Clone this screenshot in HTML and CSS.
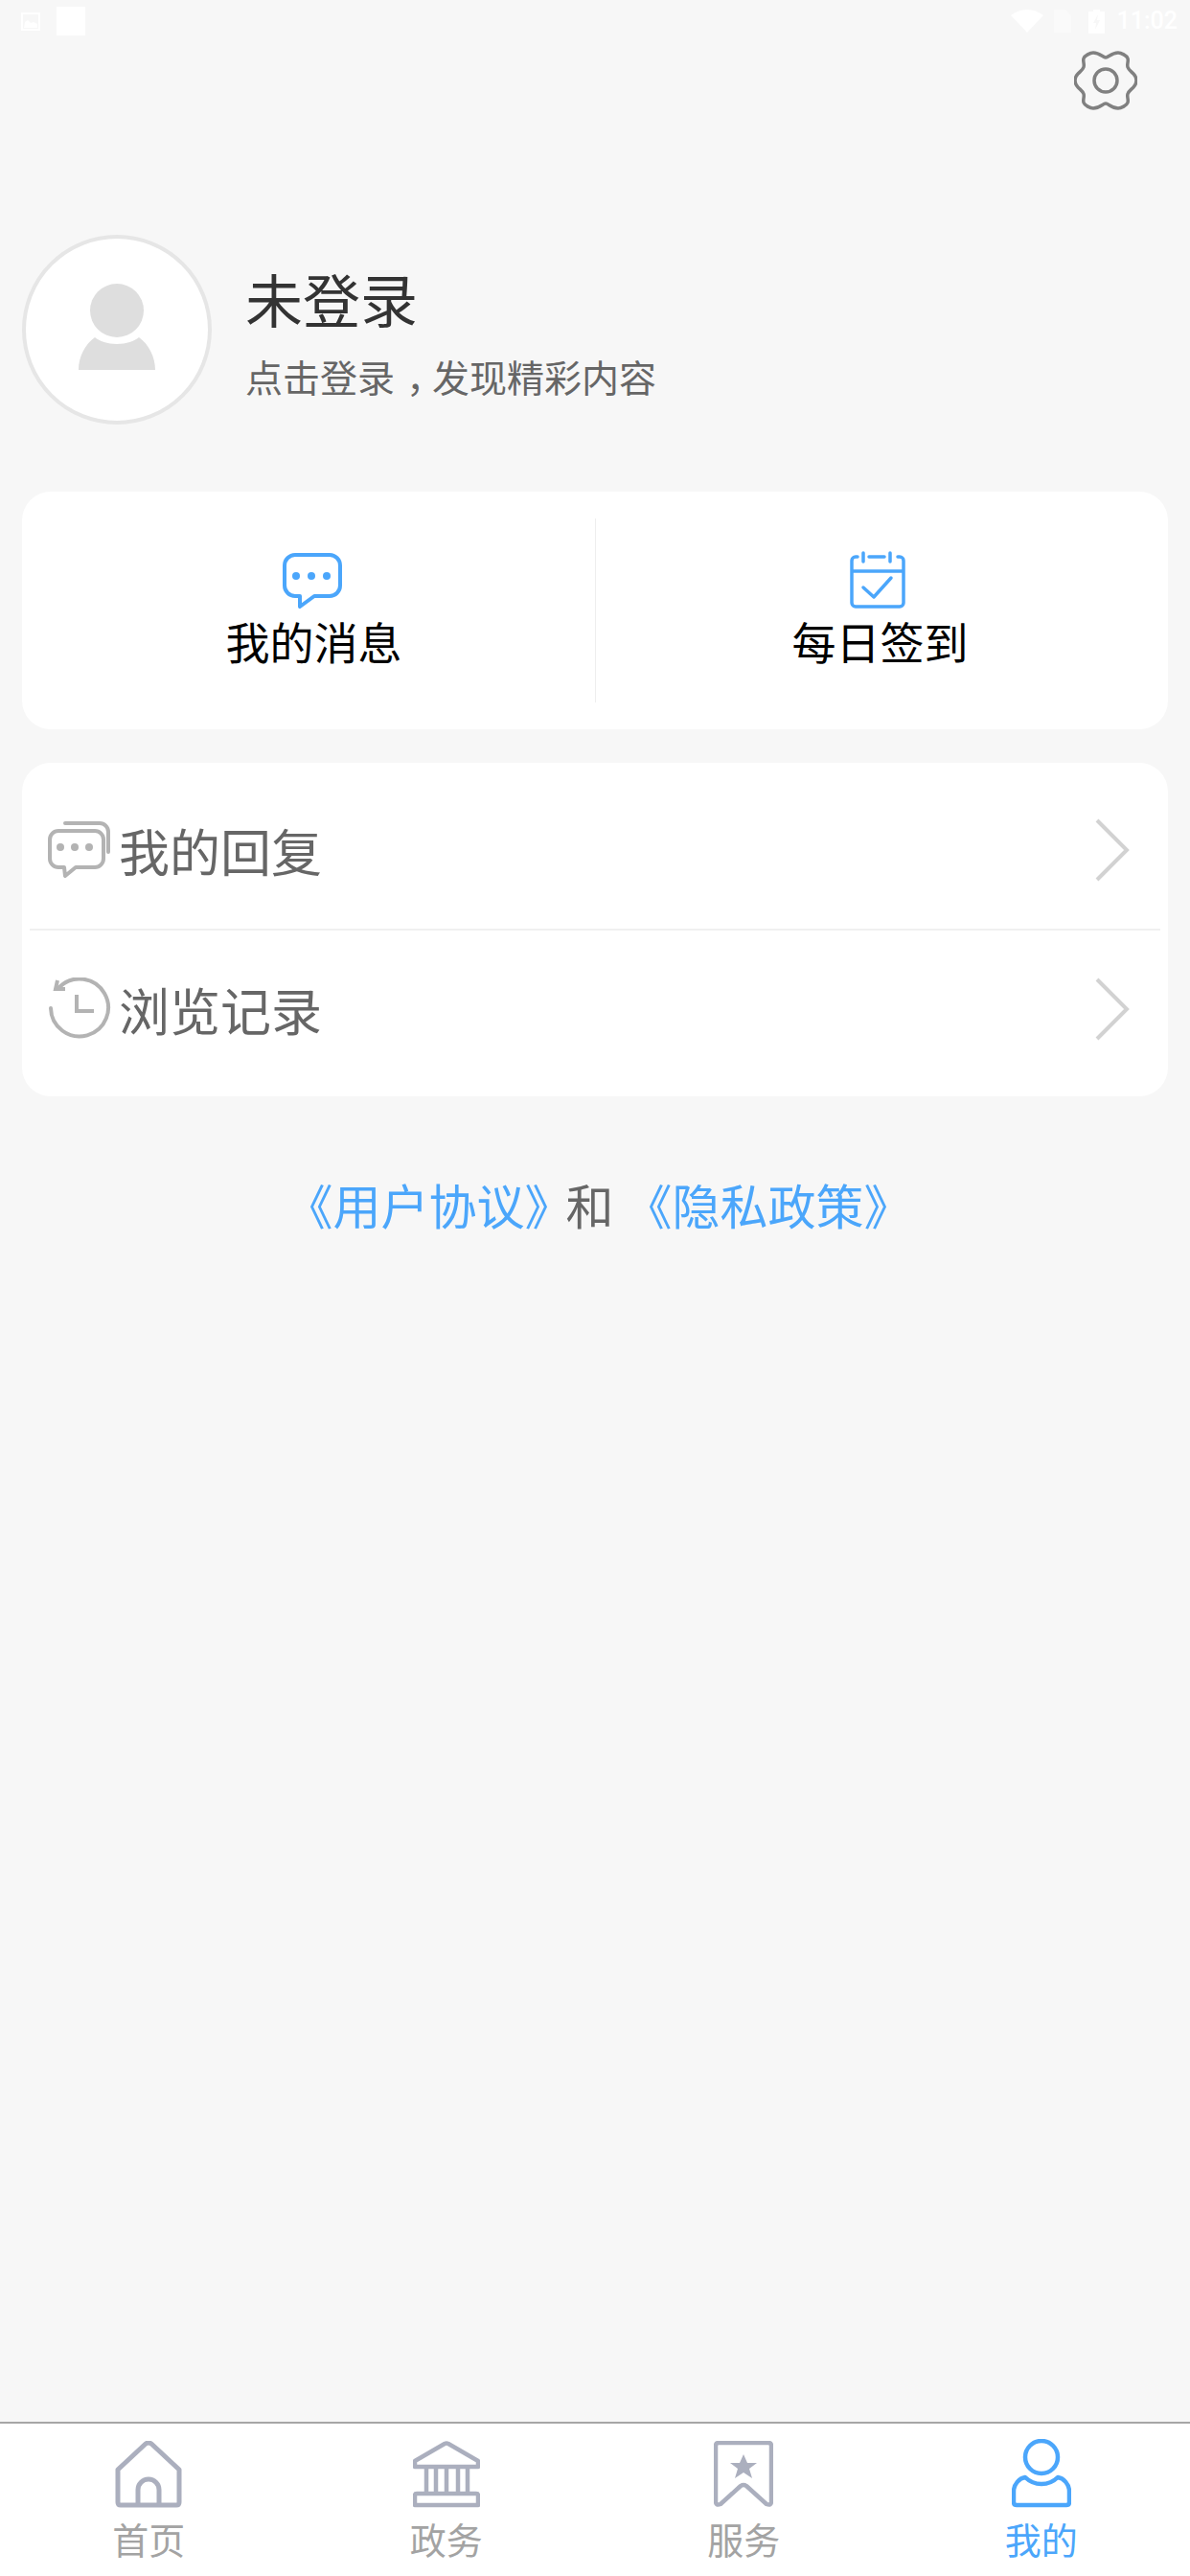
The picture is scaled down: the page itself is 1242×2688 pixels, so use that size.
FILE: index.html
```html
<!DOCTYPE html>
<html lang="zh-Hans">
<head>
<meta charset="utf-8">
<title>我的</title>
<link rel="stylesheet" href="styles.css">
</head>
<body>
<div class="page">
  <div class="status">
    <div class="status-left">
      <svg class="st-note" width="22" height="22" viewBox="0 0 22 22"><path d="M2 2h18v17H2z" fill="none" stroke="#fff" stroke-width="2"/><path d="M4 17l1-6 3-2 3 3 3-1 4 2v4z" fill="#fff"/></svg>
      <span class="st-block"></span>
    </div>
    <div class="status-right">
      <svg width="34" height="24" viewBox="0 0 34 24"><path d="M0 6Q8 0 17 0t17 6L17 24z" fill="#fff"/></svg>
      <svg class="st-sim" width="18" height="24" viewBox="0 0 18 24"><path d="M0 0h12l6 6v18H0z" fill="#fff" opacity=".35"/></svg>
      <svg class="st-bat" width="17" height="25" viewBox="0 0 17 25"><path d="M5 0h7v2h5v23H0V2h5z" fill="#fff"/><path d="M10 5l-5 9h3l-1 7 5-10H9z" fill="#f7f7f7"/></svg>
      <span class="st-time">11:02</span>
    </div>
  </div>

  <div class="top-action">
    <svg width="66" height="64" viewBox="0 0 66 64"><path d="M33 8c3 0 6-5 13-5c3 0 9 3 10 6c1 3-1 6 0 9c1 3 3 4 6 7c2 2 3 4 3 7c0 3-1 5-3 7c-3 3-5 4-6 7c-1 3 1 6 0 9c-1 3-7 6-10 6c-7 0-10-5-13-5c-3 0-6 5-13 5c-3 0-9-3-10-6c-1-3 1-6 0-9c-1-3-3-4-6-7c-2-2-3-4-3-7c0-3 1-5 3-7c3-3 5-4 6-7c1-3-1-6 0-9c1-3 7-6 10-6c7 0 10 5 13 5z" fill="none" stroke="#808080" stroke-width="3.5"/><circle cx="33" cy="32" r="12" fill="none" stroke="#808080" stroke-width="3.5"/></svg>
  </div>

  <div class="profile">
    <div class="avatar">
      <svg width="82" height="90" viewBox="0 0 82 90"><ellipse cx="41" cy="28" rx="28" ry="28" fill="#dedede"/><path d="M18 56c5 4 13 7 23 7s18-3 23-7c10 7 17 20 17 34H1c0-14 7-27 17-34z" fill="#dedede"/></svg>
    </div>
    <div class="profile-text">
      <div class="profile-name">未登录</div>
      <div class="profile-hint">点击登录<span class="comma">，</span>发现精彩内容</div>
    </div>
  </div>

  <div class="card quick">
    <div class="quick-item quick-item-left">
      <svg class="quick-icon" width="62" height="58" viewBox="0 0 62 58"><path d="M13 2h36a11 11 0 0 1 11 11v21a11 11 0 0 1-11 11H33L18 56V45h-5A11 11 0 0 1 2 34V13A11 11 0 0 1 13 2z" fill="none" stroke="#4ba6fb" stroke-width="4" stroke-linejoin="round"/><circle cx="14" cy="24" r="4" fill="#4ba6fb"/><circle cx="30" cy="24" r="4" fill="#4ba6fb"/><circle cx="46" cy="24" r="4" fill="#4ba6fb"/></svg>
      <span class="quick-label">我的消息</span>
    </div>
    <div class="quick-item quick-item-right">
      <svg class="quick-icon" width="58" height="60" viewBox="0 0 58 60"><path d="M8 6H6a4 4 0 0 0-4 4v44a4 4 0 0 0 4 4h46a4 4 0 0 0 4-4V10a4 4 0 0 0-4-4h-2M20 6h16M2 21h54M14 2v9M42 2v9" fill="none" stroke="#4ba6fb" stroke-width="3.5" stroke-linecap="round"/><path d="M14 38l11 10 18-20" fill="none" stroke="#4ba6fb" stroke-width="3.5" stroke-linecap="round" stroke-linejoin="round"/></svg>
      <span class="quick-label">每日签到</span>
    </div>
  </div>

  <div class="card list">
    <div class="list-row list-row-first">
      <svg class="list-icon" width="66" height="60" viewBox="0 0 66 60"><path d="M18 2h36a9 9 0 0 1 9 9v21" fill="none" stroke="#b3b3b3" stroke-width="4" stroke-linecap="round"/><path d="M11 10h38a9 9 0 0 1 9 9v20a9 9 0 0 1-9 9H29L18 57l-1-9h-6a9 9 0 0 1-9-9V19a9 9 0 0 1 9-9z" fill="none" stroke="#b3b3b3" stroke-width="4" stroke-linejoin="round"/><circle cx="13" cy="27" r="4" fill="#b3b3b3"/><circle cx="28" cy="27" r="4" fill="#b3b3b3"/><circle cx="43" cy="27" r="4" fill="#b3b3b3"/></svg>
      <span class="list-label">我的回复</span>
      <svg class="chevron" width="36" height="66" viewBox="0 0 36 66"><path d="M2 2l31 31L2 64" fill="none" stroke="#d2d2d2" stroke-width="4"/></svg>
    </div>
    <div class="list-row list-row-split">
      <svg class="list-icon" width="66" height="66" viewBox="0 0 66 66"><path d="M12 10A30 30 0 1 1 3 32" fill="none" stroke="#b3b3b3" stroke-width="4" stroke-linecap="round"/><path d="M10 3L8 12l10 0" fill="none" stroke="#b3b3b3" stroke-width="4"/><path d="M30 18v17h18" fill="none" stroke="#b3b3b3" stroke-width="4"/></svg>
      <span class="list-label">浏览记录</span>
      <svg class="chevron" width="36" height="66" viewBox="0 0 36 66"><path d="M2 2l31 31L2 64" fill="none" stroke="#d2d2d2" stroke-width="4"/></svg>
    </div>
  </div>

  <div class="legal"><span class="link link-first">《用户协议<span class="tight">》</span></span>和 <span class="link">《隐私政策》</span></div>

  <div class="tabbar">
    <div class="tab">
      <svg width="70" height="70" viewBox="0 0 70 70"><path d="M3 30L32 3q3-2 6 0l29 27v34q0 3-3 3H6q-3 0-3-3zM24 67V51a11 11 0 0 1 22 0v16" fill="none" stroke="#abafbe" stroke-width="5" stroke-linejoin="round"/></svg>
      <span class="tab-label">首页</span>
    </div>
    <div class="tab">
      <svg width="70" height="70" viewBox="0 0 70 70"><path d="M33 3q2-1 4 0l31 18v6H2v-6zM14 27v28M24 27v28M35 27v28M47 27v28M57 27v28M4 55h62q2 0 2 2v10H2V57q0-2 2-2z" fill="none" stroke="#abafbe" stroke-width="4.5" stroke-linejoin="round"/></svg>
      <span class="tab-label">政务</span>
    </div>
    <div class="tab">
      <svg width="62" height="70" viewBox="0 0 62 70"><path d="M5 2h52q3 0 3 3v58q0 5-5 3L34 47q-3-2-6 0L7 66q-5 2-5-3V5q0-3 3-3z" fill="none" stroke="#abafbe" stroke-width="4.5" stroke-linejoin="round"/><path d="M31 14l4 9h10l-8 6 3 10-9-6-9 6 3-10-8-6h10z" fill="#abafbe"/></svg>
      <span class="tab-label">服务</span>
    </div>
    <div class="tab tab-active">
      <svg width="62" height="72" viewBox="0 0 62 72"><ellipse cx="31" cy="19" rx="17" ry="17" fill="none" stroke="#4ba6fb" stroke-width="4.5"/><path d="M14 40c4 4 10 7 17 7s13-3 17-7c6 1 12 7 12 15v11q0 3-3 3H5q-3 0-3-3V55c0-8 6-14 12-15z" fill="none" stroke="#4ba6fb" stroke-width="4.5" stroke-linejoin="round"/></svg>
      <span class="tab-label">我的</span>
    </div>
  </div>
</div>
</body>
</html>
```

FILE: styles.css
```css
* { box-sizing: border-box; }
html, body { margin: 0; padding: 0; }
body {
  width: 1242px;
  height: 2688px;
  background: #f7f7f7;
  font-family: "Noto Sans CJK SC", "Noto Sans", sans-serif;
  overflow: hidden;
}
.page {
  height: 2688px;
  display: flex;
  flex-direction: column;
}
.status {
  height: 52px;
  flex: none;
  display: flex;
  justify-content: space-between;
  padding: 7px 13px 0 21px;
}
.status-left { display: flex; gap: 16px; }
.st-note { margin-top: 5px; }
.st-block { width: 30px; height: 30px; background: #fff; }
.status-right { display: flex; align-items: flex-start; padding-top: 3px; }
.st-sim { margin-left: 11px; }
.st-bat { margin-left: 18px; }
.st-time {
  margin-left: 13px;
  color: #fff;
  font: 500 25px/24px Roboto, sans-serif;
}
.top-action {
  height: 64px;
  flex: none;
  display: flex;
  justify-content: flex-end;
  padding-right: 55px;
}
.profile {
  flex: none;
  margin-top: 129px;
  padding-left: 23px;
  display: flex;
  align-items: center;
  gap: 35px;
}
.avatar {
  width: 198px;
  height: 198px;
  border-radius: 50%;
  border: 4px solid #e6e6e6;
  background: #fff;
  display: flex;
  align-items: flex-start;
  justify-content: center;
  padding-top: 47px;
}
.profile-text { padding-top: 4px; }
.profile-name {
  font-size: 60px;
  line-height: 72px;
  color: #333;
}
.profile-hint {
  margin-top: 20px;
  font-size: 39px;
  line-height: 50px;
  color: #666;
}
.comma {
  margin-left: 12px;
  letter-spacing: -12px;
}
.card {
  flex: none;
  margin: 0 23px;
  background: #fff;
  border-radius: 30px;
}
.quick {
  margin-top: 70px;
  height: 248px;
  padding: 28px 0;
  display: flex;
}
.quick-item {
  display: flex;
  flex-direction: column;
  align-items: center;
  padding-top: 36px;
}
.quick-item-left {
  width: 598px;
  flex: none;
  padding-left: 11px;
}
.quick-item-right {
  flex: 1;
  border-left: 1px solid #eeeeee;
  padding-right: 4px;
}
.quick-icon { margin-right: 3px; flex: none; }
.quick-item-right .quick-icon {
  margin-top: -2px;
  margin-right: 6px;
}
.quick-label {
  margin-top: 5px;
  font-size: 46px;
  line-height: 56px;
  color: #000;
}
.list {
  margin-top: 35px;
  height: 348px;
  padding: 0 8px;
}
.list-row {
  display: flex;
  align-items: center;
  padding: 0 32px 0 19px;
}
.list-row-first {
  height: 173px;
  padding-top: 9px;
}
.list-row-split {
  height: 175px;
  padding-bottom: 9px;
  border-top: 2px solid #f0f0f0;
}
.list-icon { flex: none; }
.list-label {
  flex: 1;
  margin-left: 8px;
  font-size: 53px;
  line-height: 64px;
  color: #666;
}
.chevron { flex: none; }
.legal {
  flex: none;
  margin-top: 77px;
  text-align: center;
  font-size: 50px;
  line-height: 70px;
  color: #666;
}
.link { color: #4ba6fb; }
.link-first { margin-left: 7px; }
.tight { letter-spacing: -7px; }
.tabbar {
  margin-top: auto;
  height: 161px;
  flex: none;
  background: #fff;
  border-top: 2px solid #a6a6a6;
  display: grid;
  grid-template-columns: repeat(4, 1fr);
}
.tab {
  display: flex;
  flex-direction: column;
  align-items: center;
  padding-top: 18px;
}
.tab-active { padding-top: 16px; }
.tab-label {
  margin-top: 9px;
  font-size: 38px;
  line-height: 46px;
  color: #a3a3a3;
}
.tab-active .tab-label { color: #4ba6fb; }
```
